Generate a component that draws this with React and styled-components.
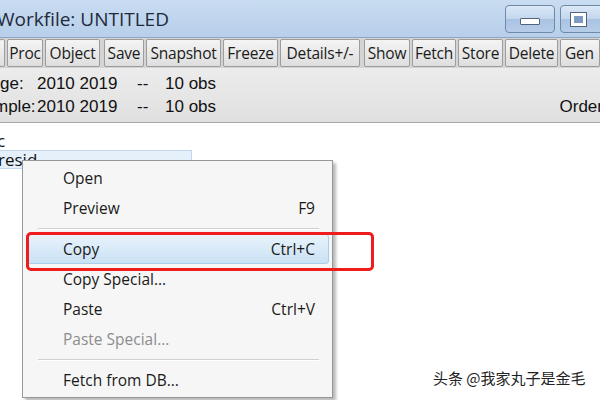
import styled, { createGlobalStyle } from 'styled-components'

const GlobalStyle = createGlobalStyle`
  html, body {
    margin: 0;
    padding: 0;
    width: 600px;
    height: 400px;
    overflow: hidden;
    background: #ffffff;
  }
`

const toolbarButtons = [
  { label: '', width: 6 },
  { label: 'Proc', width: 36 },
  { label: 'Object', width: 55 },
  { sep: true },
  { label: 'Save', width: 40 },
  { label: 'Snapshot', width: 75 },
  { label: 'Freeze', width: 55 },
  { label: 'Details+/-', width: 80 },
  { sep: true },
  { label: 'Show', width: 46 },
  { label: 'Fetch', width: 44 },
  { label: 'Store', width: 45 },
  { label: 'Delete', width: 53 },
  { label: 'Gen', width: 40, left: true },
]

const menuItems = [
  { label: 'Open' },
  { label: 'Preview', shortcut: 'F9' },
  { sep: true },
  { label: 'Copy', shortcut: 'Ctrl+C', active: true },
  { label: 'Copy Special...' },
  { label: 'Paste', shortcut: 'Ctrl+V' },
  { label: 'Paste Special...', disabled: true },
  { sep: true },
  { label: 'Fetch from DB...' },
]

const App = () => {
  return (
    <Window>
      <GlobalStyle />
      <TitleBar>
        <Title>Workfile: UNTITLED</Title>
        <WinButtons>
          <WinButton>
            <MinGlyph />
          </WinButton>
          <WinButton>
            <MaxGlyph />
          </WinButton>
        </WinButtons>
      </TitleBar>

      <Toolbar>
        {toolbarButtons.map((b, i) =>
          b.sep ? (
            <ToolSep key={i} />
          ) : (
            <ToolButton key={i} $w={b.width} $left={b.left}>
              {b.label}
            </ToolButton>
          )
        )}
      </Toolbar>

      <InfoPanel>
        <InfoRow>
          <Label $indent={6}>ge:</Label>
          <span>2010 2019</span>
          <span>--</span>
          <span>10 obs</span>
        </InfoRow>
        <InfoRow>
          <Label>mple:</Label>
          <span>2010 2019</span>
          <span>--</span>
          <span>10 obs</span>
          <Order>Order</Order>
        </InfoRow>
      </InfoPanel>

      <ListArea>
        <ListItem>c</ListItem>
        <ListItem $selected>resid</ListItem>

        <Menu>
          {menuItems.map((m, i) =>
            m.sep ? (
              <MenuSep key={i} />
            ) : (
              <MenuItem key={i} $active={m.active} $disabled={m.disabled}>
                <span>{m.label}</span>
                {m.shortcut && <span>{m.shortcut}</span>}
              </MenuItem>
            )
          )}
        </Menu>

        <Highlight />
        <Watermark>头条 @我家丸子是金毛</Watermark>
      </ListArea>
    </Window>
  )
}
export default App

const Window = styled.div`
  width: 600px;
  height: 400px;
  display: flex;
  flex-direction: column;
  overflow: hidden;
  background: #ffffff;
`

const TitleBar = styled.div`
  height: 38px;
  flex-shrink: 0;
  display: flex;
  align-items: center;
  justify-content: space-between;
  background: linear-gradient(#c9dcf1, #b7cfea);
  border-bottom: 1px solid #8ea6c4;
  box-sizing: border-box;
`

const Title = styled.div`
  font-family: 'Open Sans', 'Noto Sans', sans-serif;
  font-size: 19px;
  color: #1e2a3a;
  margin-left: -3px;
  padding-top: 1px;
`

const WinButtons = styled.div`
  display: flex;
  gap: 5px;
  align-self: flex-start;
  margin-right: -10px;
`

const WinButton = styled.div`
  width: 50px;
  height: 28px;
  margin-top: 5px;
  border: 1px solid #6f89a9;
  border-radius: 4px;
  box-sizing: border-box;
  background: linear-gradient(#dbe8f6 0%, #c3d7ee 48%, #a9c3e2 52%, #b6cde8 100%);
  display: flex;
  align-items: center;
  justify-content: center;
`

const MinGlyph = styled.div`
  width: 18px;
  height: 5px;
  background: #ffffff;
  border: 1px solid #52637a;
  border-radius: 1px;
  margin-top: 4px;
`

const MaxGlyph = styled.div`
  width: 9px;
  height: 7px;
  border: 3px solid #ffffff;
  outline: 1px solid #52637a;
  background: #7d9ac0;
  margin-right: 14px;
`

const Toolbar = styled.div`
  height: 30px;
  flex-shrink: 0;
  display: flex;
  align-items: stretch;
  gap: 2px;
  padding: 1px 0;
  box-sizing: border-box;
  background: #d4d4d4;
  margin-left: -1px;
  white-space: nowrap;
`

const ToolButton = styled.div`
  flex-shrink: 0;
  width: ${(p) => p.$w}px;
  display: flex;
  align-items: center;
  justify-content: ${(p) => (p.$left ? 'flex-start' : 'center')};
  padding-left: ${(p) => (p.$left ? '4px' : '0')};
  box-sizing: border-box;
  border: 1px solid #9c9c9c;
  border-radius: 2px;
  background: linear-gradient(#f4f4f4, #dedede);
  font-family: 'Open Sans', 'Noto Sans', sans-serif;
  font-size: 15.5px;
  letter-spacing: -0.2px;
  color: #1b1b1b;
  overflow: hidden;
`

const ToolSep = styled.div`
  width: 6px;
  margin: -1px 0;
  background: #8c8c8c;
`

const InfoPanel = styled.div`
  height: 55px;
  flex-shrink: 0;
  display: flex;
  flex-direction: column;
  justify-content: center;
  gap: 2px;
  background: linear-gradient(#ececec, #e0e0e0);
  border-bottom: 1px solid #a8a8a8;
  box-sizing: border-box;
  font-family: 'Liberation Sans', Arial, sans-serif;
  font-size: 17px;
  color: #111111;
`

const InfoRow = styled.div`
  display: grid;
  grid-template-columns: 43px 100px 28px 100px 1fr;
  height: 21px;
  align-items: center;
  margin-left: -6px;
  white-space: nowrap;
`

const Label = styled.span`
  justify-self: start;
  margin-left: ${(p) => p.$indent || 0}px;
`

const Order = styled.span`
  justify-self: end;
  margin-right: -3px;
`

const ListArea = styled.div`
  position: relative;
  flex: 1;
  padding-top: 8px;
  font-family: 'Open Sans', 'Noto Sans', sans-serif;
  font-size: 17px;
  color: #111111;
`

const ListItem = styled.div`
  width: 195px;
  height: 19px;
  line-height: 19px;
  margin-left: -3px;
  box-sizing: border-box;
  ${(p) =>
    p.$selected &&
    `
    background: #e6f0fb;
    border: 1px solid #c3d8f0;
    line-height: 17px;
  `}
`

const Menu = styled.div`
  position: absolute;
  left: 22px;
  top: 37px;
  width: 311px;
  padding: 2px 3px;
  box-sizing: border-box;
  background: #f6f6f6;
  border: 1px solid #979797;
  box-shadow: 3px 3px 3px rgba(0, 0, 0, 0.28);
  font-family: 'Open Sans', 'Noto Sans', sans-serif;
  font-size: 15.5px;
`

const MenuItem = styled.div`
  height: 30px;
  display: flex;
  align-items: center;
  justify-content: space-between;
  padding: 0 13px 0 36px;
  box-sizing: border-box;
  border-radius: 3px;
  color: ${(p) => (p.$disabled ? '#8d8d8d' : '#1a1a1a')};
  border: 1px solid ${(p) => (p.$active ? '#a9cdeb' : 'transparent')};
  background: ${(p) =>
    p.$active ? 'linear-gradient(#e9f3fc, #c9e1f5)' : 'transparent'};
`

const MenuSep = styled.div`
  height: 1px;
  margin: 5px 10px 4px 12px;
  background: #d0d0d0;
  border-bottom: 1px solid #ffffff;
`

const Highlight = styled.div`
  position: absolute;
  left: 26px;
  top: 109px;
  width: 348px;
  height: 39px;
  box-sizing: border-box;
  border: 3.5px solid #ee1c1c;
  border-radius: 5px;
`

const Watermark = styled.div`
  position: absolute;
  left: 433px;
  top: 244px;
  font-family: 'Noto Sans CJK SC', sans-serif;
  font-size: 15px;
  color: #222222;
  text-shadow: 0 0 2px #ffffff, 0 0 2px #ffffff;
`
